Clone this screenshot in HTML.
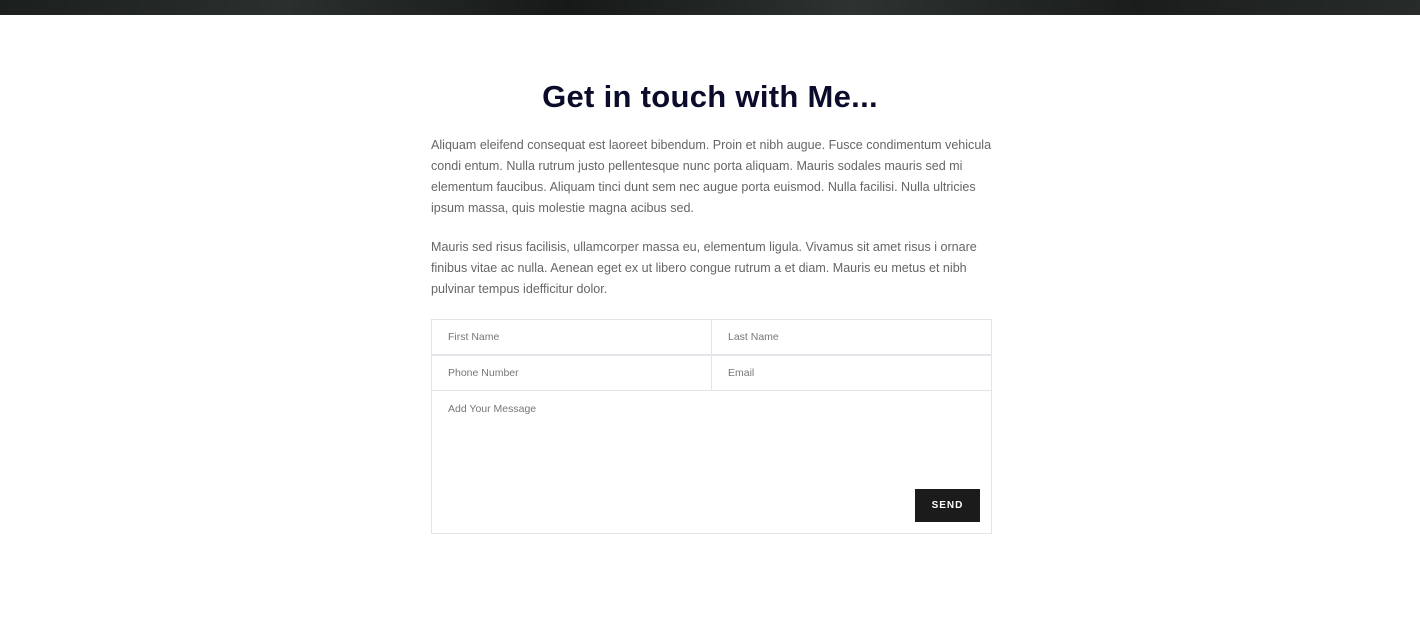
<!DOCTYPE html>
<html><head><meta charset="utf-8"><style>
*{margin:0;padding:0;box-sizing:border-box}
body{width:1420px;height:628px;background:#fff;font-family:"Liberation Sans",sans-serif;position:relative;overflow:hidden}
.banner{position:absolute;left:0;top:0;width:1420px;height:15px;background:linear-gradient(90deg,#1b1f1e,#2a302e 20%,#161918 40%,#2c3331 60%,#1a1d1c 80%,#272c2a)}
h1{position:absolute;left:0;width:1420px;top:79px;text-align:center;font-size:31px;font-weight:bold;color:#0b0b2b;letter-spacing:0.3px}
p{position:absolute;left:431px;white-space:nowrap;font-size:12.55px;line-height:21px;color:#666}
.f{position:absolute;border:1px solid #e1e4e8}
.ph{position:absolute;font-size:10.5px;color:#777}
.btn{position:absolute;left:915px;top:489px;width:65px;height:33px;background:#1b1b1b;color:#fff;font-size:10px;font-weight:bold;letter-spacing:1px;text-align:center;line-height:33px}
</style></head><body>
<div class="banner"></div>
<h1>Get in touch with Me...</h1>
<p style="top:135px">Aliquam eleifend consequat est laoreet bibendum. Proin et nibh augue. Fusce condimentum vehicula<br>condi entum. Nulla rutrum justo pellentesque nunc porta aliquam. Mauris sodales mauris sed mi<br>elementum faucibus. Aliquam tinci dunt sem nec augue porta euismod. Nulla facilisi. Nulla ultricies<br>ipsum massa, quis molestie magna acibus sed.</p>
<p style="top:237px">Mauris sed risus facilisis, ullamcorper massa eu, elementum ligula. Vivamus sit amet risus i ornare<br>finibus vitae ac nulla. Aenean eget ex ut libero congue rutrum a et diam. Mauris eu metus et nibh<br>pulvinar tempus idefficitur dolor.</p>
<div class="f" style="left:431px;top:319px;width:281px;height:36px"></div>
<div class="f" style="left:711px;top:319px;width:281px;height:36px"></div>
<div class="f" style="left:431px;top:355px;width:281px;height:36px"></div>
<div class="f" style="left:711px;top:355px;width:281px;height:36px"></div>
<div class="f" style="left:431px;top:390px;width:561px;height:144px"></div>
<div class="ph" style="left:448px;top:331px">First Name</div>
<div class="ph" style="left:728px;top:331px">Last Name</div>
<div class="ph" style="left:448px;top:367px">Phone Number</div>
<div class="ph" style="left:728px;top:367px">Email</div>
<div class="ph" style="left:448px;top:403px">Add Your Message</div>
<div class="btn">SEND</div>
</body></html>
